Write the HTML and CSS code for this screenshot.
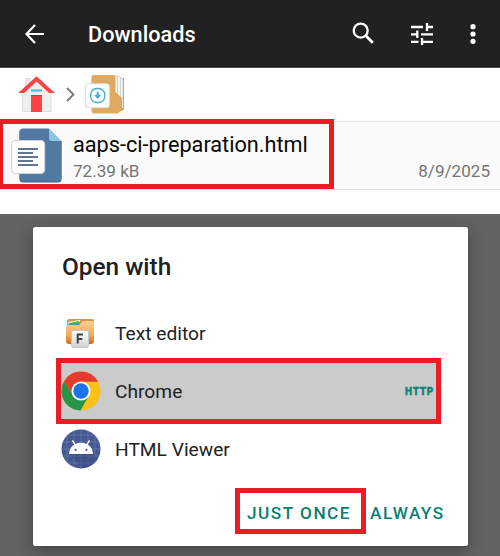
FILE: index.html
```html
<!DOCTYPE html>
<html lang="en">
<head>
<meta charset="utf-8">
<title>Downloads</title>
<link rel="stylesheet" href="styles.css">
</head>
<body>
<header class="appbar">
  <svg class="back" width="20" height="20" viewBox="0 0 20 20"><path d="M10 1 L1.5 10 L10 19 M1.5 10 H19" fill="none" stroke="#fff" stroke-width="2.2"/></svg>
  <h1 class="title">Downloads</h1>
  <svg class="search" width="23" height="23" viewBox="0 0 23 23"><circle cx="8.7" cy="8.6" r="7" fill="none" stroke="#fff" stroke-width="2.3"/><path d="M13.6 13.6 L20.8 20.8" stroke="#fff" stroke-width="2.8"/></svg>
  <svg class="tune" width="22" height="22" viewBox="0 0 22 22"><path d="M0 4H12M16 4H22M16 0V8M0 11.3H6M6.3 7.5V15M10 11.3H22M0 18.8H7.5M11 15V22.3M11 18.8H22" fill="none" stroke="#fff" stroke-width="2.3"/></svg>
  <svg class="more" width="6" height="20" viewBox="0 0 6 20"><g fill="#fff"><circle cx="3" cy="2.7" r="2.6"/><circle cx="3" cy="10" r="2.6"/><circle cx="3" cy="17.3" r="2.6"/></g></svg>
</header>
<nav class="crumbs">
  <svg width="38" height="38" viewBox="0 0 38 38">
    <path d="M8 12V3.5h4V10" fill="#eee" stroke="#d4d4d4"/>
    <path d="M4.500 15 L18.500 4 L33 15V36.500H4.500Z" fill="#efefef" stroke="#ddd"/>
    <path d="M.2 18 L18.500 1.300 L37 18H31L18.500 6.500 L6 18Z" fill="#ff4245"/>
    <path d="M13 15.500H24" stroke="#4bb6dc" stroke-width="2"/>
    <path d="M13 20.500H24V37H13Z" fill="#ff4245"/><path d="M13 20.500H24" stroke="#dd3438"/>
  </svg>
  <svg class="chevron" width="9" height="15" viewBox="0 0 9 15"><path d="M1 1L7.500 7.500L1 14" fill="none" stroke="#777" stroke-width="1.800"/></svg>
  <svg width="40" height="40" viewBox="0 0 40 40">
    <path d="M30 4h9v31l-3 2h-6Z" fill="#bd8142"/>
    <path d="M29 2h5l4 3v29H29Z" fill="#f4f4f4" stroke="#d5d5d5"/><path d="M32.500 2v32M35.500 4v30" stroke="#c9c9c9" stroke-width=".8"/>
    <path d="M8.500 1H28q2.500 0 2.500 2V18L37 24V35L33 39.500H9q-2.500 0-2.500-2V3q0-2 2-2Z" fill="#dfa960"/>
    <rect x=".6" y="9.700" width="23.800" height="24" rx="3" fill="#fff" stroke="#dcdcdc" stroke-width="1.100"/>
    <rect x="5.700" y="14.500" width="14" height="14" rx="6" fill="#fff" stroke="#43abd0" stroke-width="1.300"/>
    <path d="M11.600 18h2.200v3h2.500l-3.600 4-3.600-4h2.500Z" fill="#43abd0"/>
  </svg>
</nav>
<section class="file">
  <svg class="doc" width="52" height="55" viewBox="0 0 52 55">
    <path d="M12 1H39L50.500 13V51q0 3.500-3.500 3.500H12q-3.500 0-3.500-3.500V4.500Q8.500 1 12 1Z" fill="#3d6288"/>
    <path d="M12 .5H38L50.500 13V50q0 3.500-3.500 3.500H12q-3.500 0-3.500-3.500V4Q8.500 .5 12 .5Z" fill="#5279a1"/>
    <path d="M38 .5L50.500 13H41q-3 0-3-3Z" fill="#8dc4e3"/>
    <path d="M36 -1H52V13H50.500L38 .5Z" fill="#fafafa"/>
    <rect x=".6" y="12.500" width="33" height="33" rx="4" fill="#fff" stroke="#d2d6dc" stroke-width="1.200"/>
    <path d="M7 21H27M7 25H22M7 29H27M7 33H22M7 37H27" stroke="#35456f" stroke-width="1.500"/>
  </svg>
  <div class="file-info"><div class="file-name">aaps-ci-preparation.html</div><div class="meta"><span class="size">72.39 kB</span><span class="date">8/9/2025</span></div></div>
  <div class="mark mark-file"></div>
</section>
<main class="scrim">
  <div class="dialog">
    <h2 class="dialog-title">Open with</h2>
    <div class="option">
      <svg class="icon" width="40" height="40" viewBox="0 0 40 40">
        <defs><linearGradient id="folder" x2="0" y2="1"><stop stop-color="#ffd096"/><stop offset=".65" stop-color="#eea654"/><stop offset="1" stop-color="#c96a1c"/></linearGradient><linearGradient id="tile" x2="0" y2="1"><stop stop-color="#fff"/><stop offset="1" stop-color="#cfd1d3"/></linearGradient></defs>
        <path d="M6 8q0-2 2-2H31q2 0 2 2v8H6Z" fill="#d79650"/><path d="M7.500 9L19 7v6H7Z" fill="#fff"/><path d="M8 10L18 8l3 4H7Z" fill="#68a841"/><path d="M7 12l10-1 3 2H7Z" fill="#3e8dc4"/>
        <path d="M5 14q0-2 2-2H18l4-4H31q2 0 2 2V28q0 3-3 3H8q-3 0-3-3Z" fill="url(#folder)"/>
        <rect x="10.500" y="17.500" width="17" height="17" rx="2" fill="url(#tile)" stroke="#c5c7c8"/>
        <path d="M16.700 30.500V21.600H22M16.700 26H21.300" fill="none" stroke="#3b4248" stroke-width="2"/>
      </svg><span>Text editor</span>
    </div>
    <div class="option selected">
      <svg class="icon" width="40" height="40" viewBox="0 0 48 48">
        <circle cx="24" cy="24" r="23.500" fill="#fbc116"/>
        <path d="M24 13H44.700A23.500 23.500 0 0 0 3.500 12.500L14.500 29.500Z" fill="#e33b2e"/>
        <path d="M3.500 12.500A23.500 23.500 0 0 0 23.500 47.500L33.500 29.500L24 34Q17 34 14.500 29.500Z" fill="#269447"/>
        <circle cx="24" cy="24" r="11.500" fill="#fff"/><circle cx="24" cy="24" r="9.200" fill="#1a73e8"/>
      </svg><span>Chrome</span><span class="http">HTTP</span>
      <div class="mark mark-option"></div>
    </div>
    <div class="option">
      <svg class="icon" width="40" height="40" viewBox="0 0 40 40">
        <defs><clipPath id="disc"><circle cx="20" cy="20" r="19.500"/></clipPath></defs>
        <g clip-path="url(#disc)"><path d="M0 0H40V40H0Z" fill="#465892"/><path d="M6 0V40M13 0V40M20 0V40M27 0V40M34 0V40M0 6H40M0 13H40M0 20H40M0 27H40M0 34H40" stroke="#7183b5" stroke-width=".6"/><path d="M8 25H32L40 33V40H23Z" fill="#35477b" opacity=".4"/></g>
        <path d="M8 25Q8.500 18.500 13.200 15.600L10.800 11.700L12 11L14.500 14.900Q20 12.700 25.500 14.900L28 11L29.200 11.700L26.800 15.600Q31.500 18.500 32 25Z" fill="#fff"/><circle cx="14.600" cy="20.800" r="1.100" fill="#465892"/><circle cx="25.400" cy="20.800" r="1.100" fill="#465892"/>
      </svg><span>HTML Viewer</span>
    </div>
    <div class="actions"><button class="once">JUST ONCE<span class="mark mark-once"></span></button><button class="always">ALWAYS</button></div>
  </div>
</main>
</body>
</html>
```
FILE: styles.css
```css
* { box-sizing: border-box; }
body { margin: 0; width: 500px; height: 556px; overflow: hidden; background: #fff; font-family: Roboto, sans-serif; }
svg { display: block; flex: none; }
h1, h2 { margin: 0; }
.appbar { height: 68px; background: #212121; display: flex; align-items: center; padding-left: 25px; border-bottom: 1px solid #4b4b4b; }
.title { width: 220px; margin-left: 43px; color: #fff; font-size: 21.7px; font-weight: 500; line-height: 30px; padding-top: 3px; }
.search { margin-left: 44px; }
.tune { margin-left: 36px; }
.more { margin-left: 37px; }
.crumbs { height: 53px; display: flex; align-items: center; padding: 0 0 1px 18px; }
.chevron { margin: 0 10px 0 10px; }
.file { position: relative; height: 69px; display: flex; background: #fafafa; border: solid #e3e3e3; border-width: 1px 0; padding: 6px 10px 0 11px; }
.file-info { flex: 1; padding-left: 10px; }
.file-name { font-size: 21.7px; line-height: 28px; color: #080808; margin-top: 3px; white-space: nowrap; }
.meta { display: flex; justify-content: space-between; font-size: 17.1px; line-height: 22px; color: #757575; margin-top: 1px; }
.mark { position: absolute; border: 5px solid #ed1c24; pointer-events: none; }
.mark-file { left: -2px; top: -3px; width: 336px; height: 70px; }
.scrim { margin-top: 24px; height: 342px; background: #626262; padding: 13px 32px 10px 33px; overflow: hidden; }
.dialog { height: 319px; background: #fff; border-radius: 2px; padding: 24px 31px 0 28px; box-shadow: 0 0 1px #333, 0 5px 16px rgba(0, 0, 0, .3); }
.dialog-title { font-size: 24.4px; font-weight: 500; line-height: 32px; color: #202124; padding-left: 1px; margin-bottom: 22px; }
.option { position: relative; height: 56px; display: flex; align-items: center; margin-bottom: 2px; font-size: 19.2px; color: #202124; }
.option .icon { margin-right: 14px; }
.selected { background: #cbcbcb; }
.http { margin-left: auto; padding-right: 3px; color: #0a8577; font-size: 10px; font-weight: 900; letter-spacing: .7px; -webkit-text-stroke: .3px #0a8577; }
.mark-option { left: -5px; top: -5px; width: 385px; height: 66px; }
.actions { display: flex; margin: 23px 0 0 186px; }
button { position: relative; flex: none; padding: 0; border: 0; background: none; color: #0a8073; font: 500 17.2px/26px Roboto, sans-serif; letter-spacing: 1.5px; white-space: nowrap; text-align: left; }
.once { width: 123px; }
.mark-once { left: -12px; top: -12px; width: 131px; height: 46px; }
```
